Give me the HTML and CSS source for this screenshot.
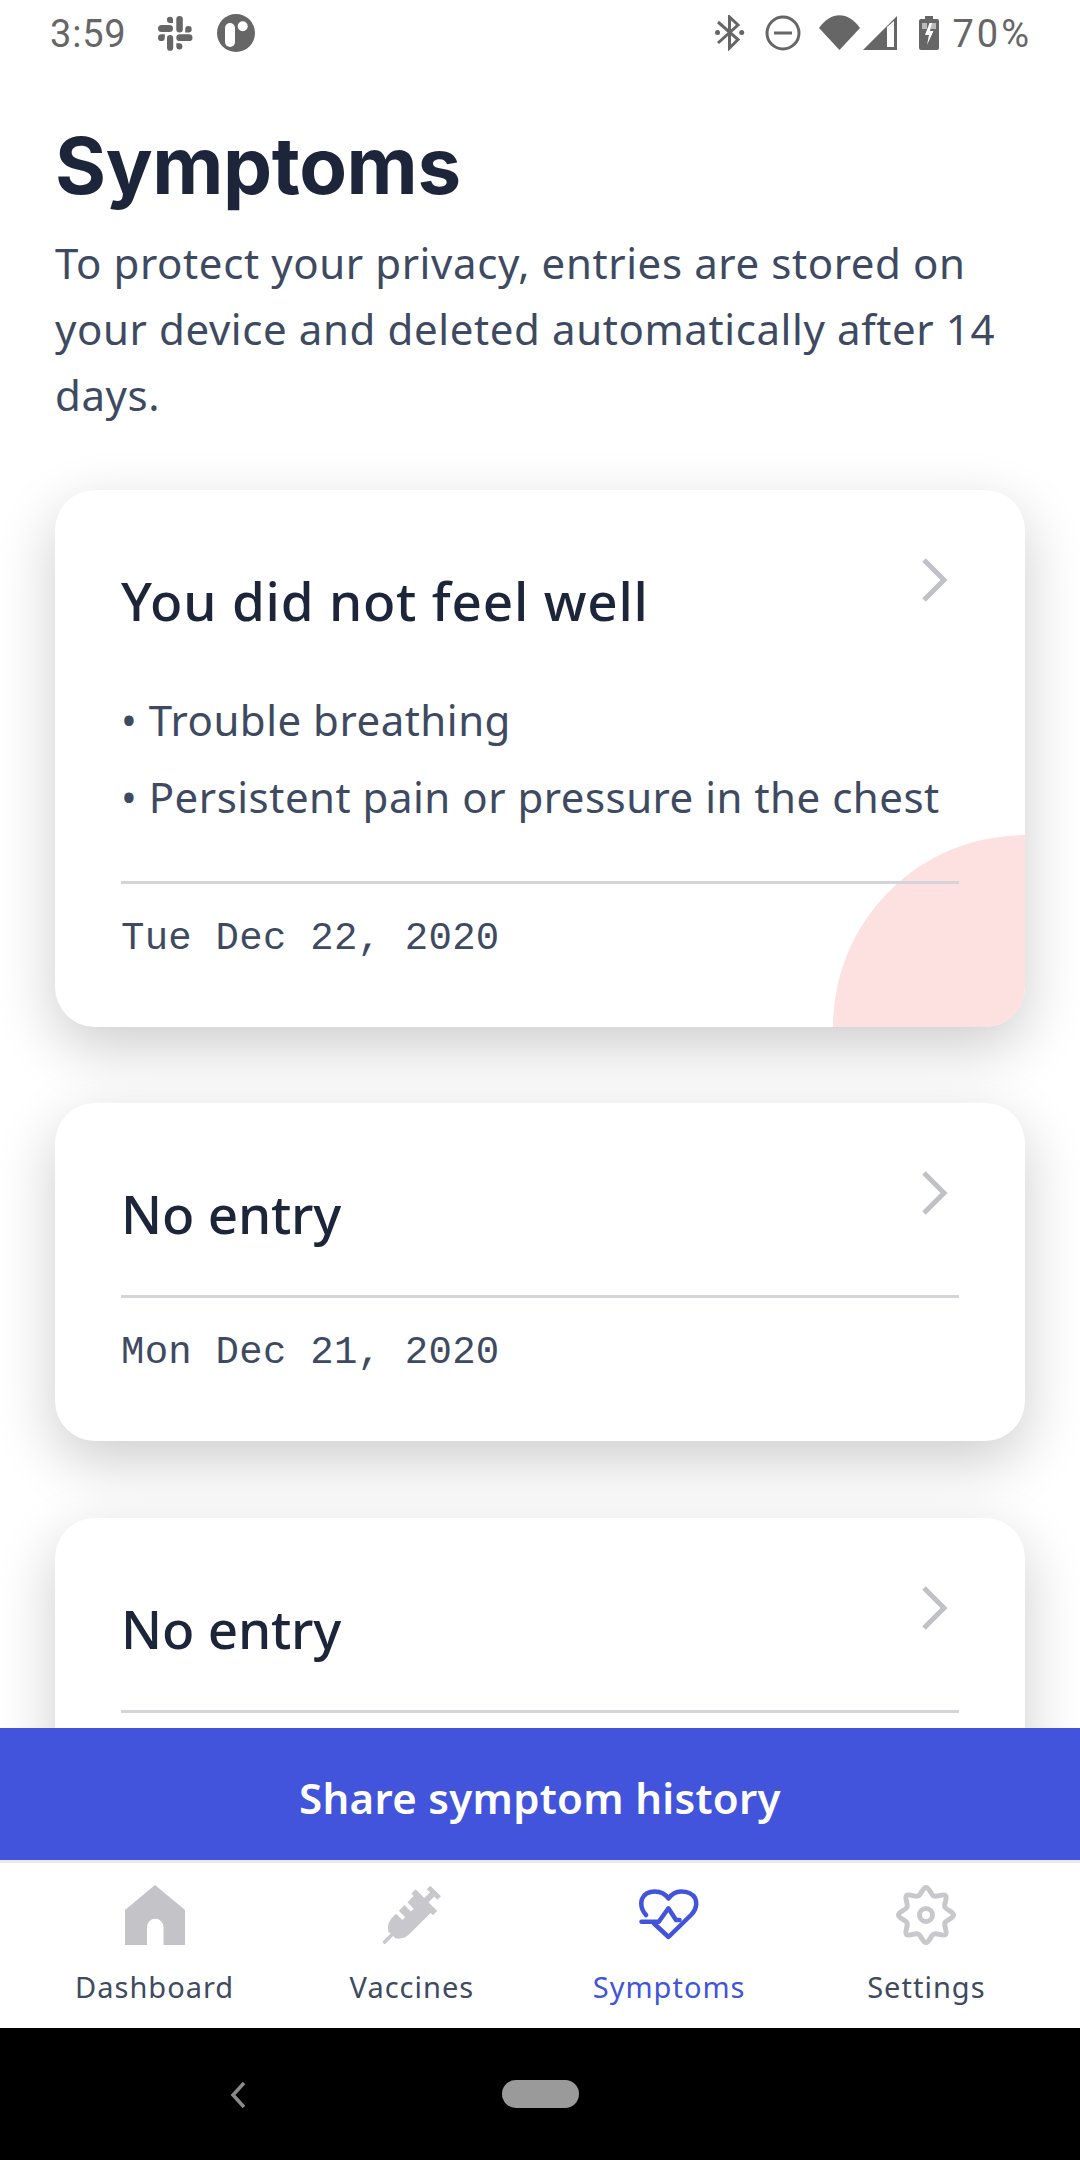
FILE: index.html
```html
<!DOCTYPE html>
<html lang="en">
<head>
<meta charset="utf-8">
<title>Symptoms</title>
<link rel="stylesheet" href="styles.css">
</head>
<body>
<div class="screen">
  <div class="status">
    <div class="status-left">
      <span class="time">3:59</span>
      <svg class="slack" viewBox="0 0 35 35" width="35" height="35"><g fill="#666"><rect x="18.300" y="0" width="6.500" height="16.500" rx="3.250"/><path d="M12 .7a3.100 3.100 0 0 1 3 3.100v3.100h-3a3.100 3.100 0 0 1 0-6.200z"/><rect x="0" y="9" width="15" height="7" rx="3.500"/><path d="M30.500 10a3.200 3.200 0 0 1 0 6.400h-3.300v-3.200a3.200 3.200 0 0 1 3.300-3.200z"/><rect x="18.300" y="18.300" width="16.200" height="6.800" rx="3.400"/><path d="M3.400 18.300h3.400v3.400a3.400 3.400 0 1 1-3.400-3.400z"/><rect x="9" y="19" width="6.200" height="15.800" rx="3.100"/><path d="M18.300 27.300h3.100a3.100 3.100 0 1 1-3.100 3.700z"/></g></svg>
      <svg class="pocket" viewBox="0 0 38 38" width="38" height="38"><circle cx="19" cy="19" r="19" fill="#666"/><rect x="8" y="9" width="10" height="24" rx="5" fill="#fff"/><circle cx="25.700" cy="12.300" r="5" fill="#fff"/></svg>
    </div>
    <div class="status-right">
      <svg viewBox="0 0 30 36" width="30" height="36"><path d="M3 7L23 24.500 14.500 33V2L23 10 3 28" fill="none" stroke="#666" stroke-width="3"/><circle cx="2.500" cy="17.500" r="2.500" fill="#666"/><circle cx="26.700" cy="17.500" r="2.500" fill="#666"/></svg>
      <svg class="dnd" viewBox="0 0 36 36" width="36" height="36"><circle cx="18" cy="18" r="16" fill="none" stroke="#666" stroke-width="3"/><rect x="9" y="16.500" width="18" height="3" fill="#666"/></svg>
      <svg class="wifi" viewBox="0 0 42 36" width="42" height="36"><path d="M0 13C12-4 29-4 41 13L20.500 35z" fill="#666"/></svg>
      <svg class="signal" viewBox="0 0 36 36" width="36" height="36"><path d="M0 35L34 1v34z" fill="#666"/><path d="M24 12v20h7V6z" fill="#fff"/></svg>
      <svg class="battery" viewBox="0 0 22 36" width="22" height="36"><path d="M7 1h8v3h4a2 2 0 0 1 2 2v27a2 2 0 0 1-2 2H3a2 2 0 0 1-2-2V6a2 2 0 0 1 2-2h4z" fill="#666"/><path d="M4 8h5v6H4zM13 8h5v6h-5z" fill="#bbb"/><path d="M11.500 8L7 20h4l-2 10 6.500-14h-3.500l2-8z" fill="#fff"/></svg>
      <span class="pct">70%</span>
    </div>
  </div>

  <main class="content">
    <h1 class="title">Symptoms</h1>
    <p class="intro">To protect your privacy, entries are stored on your device and deleted automatically after 14 days.</p>

    <section class="card card-flagged">
      <div class="blob"></div>
      <div class="card-head">
        <h2 class="card-title">You did not feel well</h2>
        <svg class="chev" viewBox="0 0 30 46" width="30" height="46"><path d="M4 3l20 20L4 43" fill="none" stroke="#c0c1c6" stroke-width="5"/></svg>
      </div>
      <ul class="list">
        <li>• Trouble breathing</li>
        <li>• Persistent pain or pressure in the chest</li>
      </ul>
      <div class="divider"></div>
      <div class="date">Tue Dec 22, 2020</div>
    </section>

    <section class="card">
      <div class="card-head">
        <h2 class="card-title card-title-short">No entry</h2>
        <svg class="chev" viewBox="0 0 30 46" width="30" height="46"><path d="M4 3l20 20L4 43" fill="none" stroke="#c0c1c6" stroke-width="5"/></svg>
      </div>
      <div class="divider"></div>
      <div class="date">Mon Dec 21, 2020</div>
    </section>

    <section class="card card-cut">
      <div class="card-head">
        <h2 class="card-title card-title-short">No entry</h2>
        <svg class="chev" viewBox="0 0 30 46" width="30" height="46"><path d="M4 3l20 20L4 43" fill="none" stroke="#c0c1c6" stroke-width="5"/></svg>
      </div>
      <div class="divider"></div>
    </section>
  </main>

  <div class="share">Share symptom history</div>

  <nav class="tabs">
    <div class="tab">
      <svg viewBox="0 0 60 60" width="60" height="60"><path d="M30 0L60 25v35H38.500V42a8.250 8.250 0 0 0-16.500 0v18H0V25z" fill="#c3c3c8"/></svg>
      <span>Dashboard</span>
    </div>
    <div class="tab">
      <svg viewBox="0 0 60 60" width="60" height="60"><g transform="translate(1.300 58.300) rotate(45)" fill="#c8c8cc"><rect x="-1.800" y="-13" width="3.600" height="13" rx="1.500"/><path d="M-12-57H12V-25Q12-17 5-12H-5Q-12-17-12-25Z"/><rect x="-15.300" y="-61" width="30.600" height="6"/><rect x="-3" y="-72" width="6" height="12"/><rect x="-7.500" y="-74" width="15" height="5"/></g><g transform="translate(1.300 58.300) rotate(45)" fill="#fff"><rect x="-13" y="-34" width="10" height="4"/><rect x="-13" y="-46" width="10" height="4"/></g></svg>
      <span>Vaccines</span>
    </div>
    <div class="tab tab-active">
      <svg viewBox="0 0 60 60" width="60" height="60"><path d="M15 38.500L29.500 52 52.500 29.500C58 24 58 17 56 13 53 8 47 6.500 42 6.500 36 6.500 32 10 29.500 13.500 27 10 22 6.500 16 6.500 10 6.500 5 9 3 14 1.500 19 2.500 25 7 30" fill="none" stroke="#4154db" stroke-width="4.500" stroke-linecap="round" stroke-linejoin="round"/><path d="M2.500 36.700H19.800L29.400 23.300 37 35H40.500" fill="none" stroke="#4154db" stroke-width="4.500" stroke-linecap="round" stroke-linejoin="round"/></svg>
      <span>Symptoms</span>
    </div>
    <div class="tab">
      <svg viewBox="0 0 60 60" width="60" height="60"><path d="M30 2.500C33.500 2.500 34.620 9.720 37.850 11.060S46.980 8.080 49.450 10.550 47.600 18.920 48.940 22.150 57.500 26.500 57.500 30 50.280 34.620 48.940 37.850 51.920 46.980 49.450 49.450 41.080 47.600 37.850 48.940 33.500 57.500 30 57.500 25.380 50.280 22.150 48.940 13.020 51.920 10.550 49.450 12.400 41.080 11.060 37.850 2.500 33.500 2.500 30 9.720 25.380 11.060 22.150 8.080 13.020 10.550 10.550 18.920 12.400 22.150 11.060 26.500 2.500 30 2.500Z" fill="none" stroke="#c8c8cc" stroke-width="5"/><circle cx="30" cy="30" r="6.500" fill="none" stroke="#c8c8cc" stroke-width="5"/></svg>
      <span>Settings</span>
    </div>
  </nav>

  <div class="sysnav">
    <svg class="back" viewBox="0 0 18 28" width="18" height="28"><path d="M15 2L4 14l11 12" fill="none" stroke="#8a8a8a" stroke-width="3.500"/></svg>
    <div class="pill"></div>
  </div>
</div>
</body>
</html>
```
FILE: styles.css
```css
* { box-sizing: border-box; }
html, body { margin: 0; padding: 0; }
body { font-family: "Noto Sans", "Liberation Sans", sans-serif; background: #fff; }
.screen { width: 1080px; height: 2160px; display: flex; flex-direction: column; overflow: hidden; background: #fff; }

.status { height: 66px; flex: none; display: flex; justify-content: space-between; align-items: center; padding: 0 48px 0 50px; color: #666; font-family: Roboto, sans-serif; font-size: 38px; }
.status-left, .status-right { display: flex; align-items: center; }
.time { padding-top: 2px; letter-spacing: .8px; }
.slack { margin-left: 32px; }
.pocket { margin-left: 24px; }
.dnd { margin-left: 20px; }
.wifi { margin-left: 18px; }
.signal { margin-left: 2px; }
.battery { margin-left: 19px; }
.pct { margin-left: 12px; padding-top: 2px; letter-spacing: 3px; }

.content { flex: 1 1 0; min-height: 0; overflow: hidden; padding: 60px 55px 0; }
.title { margin: 0; font-family: Inter, sans-serif; font-weight: 700; font-size: 78px; line-height: 80px; color: #1c2539; letter-spacing: -.4px; }
.intro { margin: 24px 0 0; font-size: 42px; line-height: 66px; letter-spacing: .6px; color: #3e4a61; }

.card { position: relative; overflow: hidden; background: #fff; border-radius: 40px; padding: 0 66px; box-shadow: 0 20px 60px rgba(0,0,0,.2); }
.content .card { margin-bottom: 77px; }
.content .card-flagged { margin-top: 62px; margin-bottom: 76px; }
.card-cut { padding-bottom: 120px; }
.blob { position: absolute; right: -192px; bottom: -192px; width: 384px; height: 384px; border-radius: 50%; background: #fde0e0; }
.card-head { position: relative; display: flex; justify-content: space-between; align-items: flex-start; padding-top: 78px; }
.card-title { margin: 0; font-size: 53px; line-height: 66px; font-weight: 500; letter-spacing: .8px; color: #1c2539; }
.card-title-short { letter-spacing: -.2px; }
.chev { position: absolute; right: 9px; top: 67px; }
.list { position: relative; margin: 47px 0 0; padding: 0; list-style: none; font-size: 42px; line-height: 77px; letter-spacing: .5px; color: #3e4a61; }
.divider { position: relative; height: 3px; background: #d4d5d9; margin-top: 48px; }
.card-flagged .divider { margin-top: 46px; }
.date { position: relative; font-family: "Liberation Mono", monospace; font-size: 39px; line-height: 48px; letter-spacing: .25px; color: #3e4a61; padding: 31px 0 64px; }

.share { flex: none; height: 132px; padding-top: 6px; display: flex; align-items: center; justify-content: center; background: #4154db; color: #fff; font-size: 42px; font-weight: 600; letter-spacing: .3px; }

.tabs { flex: none; height: 168px; display: grid; grid-template-columns: repeat(4, 1fr); padding: 0 25px 0 26px; border-top: 3px solid #e8e8ea; background: #fff; }
.tab { display: flex; flex-direction: column; align-items: center; padding-top: 22px; font-size: 29px; line-height: 42px; letter-spacing: 1px; color: #3e4a61; gap: 21px; }
.tab-active { color: #4154db; }

.sysnav { flex: none; height: 132px; background: #000; position: relative; display: flex; align-items: center; justify-content: center; }
.pill { width: 77px; height: 28px; border-radius: 14px; background: #9a9a9a; }
.back { position: absolute; left: 229px; top: 53px; }
```
